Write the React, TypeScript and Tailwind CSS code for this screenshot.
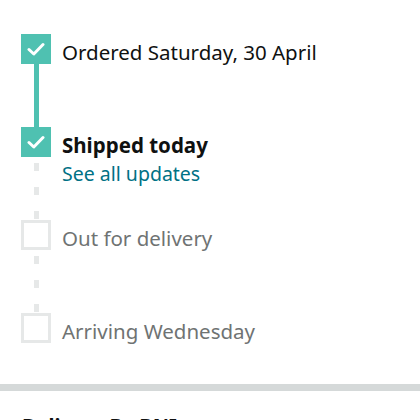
const font = { fontFamily: '"Noto Sans", "Liberation Sans", sans-serif' }

type Step = {
  label: string
  done: boolean
  current?: boolean
  link?: string
}

const steps: Step[] = [
  { label: 'Ordered Saturday, 30 April', done: true },
  { label: 'Shipped today', done: true, current: true, link: 'See all updates' },
  { label: 'Out for delivery', done: false },
  { label: 'Arriving Wednesday', done: false },
]

function Check() {
  return (
    <svg width="18" height="14" viewBox="0 0 18 14" fill="none">
      <path d="M2 7.5 L6.8 12 L16 2.5" stroke="white" strokeWidth="3" strokeLinecap="round" strokeLinejoin="round" />
    </svg>
  )
}

// 연결선: 다음 단계가 완료면 실선, 아니면 점선
function Connector({ solid }: { solid: boolean }) {
  if (solid) return <div className="w-[5px] flex-1 bg-[#4fc1b1]" />
  return (
    <div className="flex flex-1 flex-col items-center gap-[16px] pt-[6px]">
      <div className="h-[8px] w-[5px] bg-[#e6e8e8]" />
      <div className="h-[8px] w-[5px] bg-[#e6e8e8]" />
      <div className="h-[8px] w-[5px] bg-[#e6e8e8]" />
    </div>
  )
}

export default function App() {
  return (
    <div className="h-[420px] w-[420px] overflow-hidden bg-white" style={font}>
      <div className="px-[21px] pt-[34px] pb-[41px]">
        {steps.map((s, i) => {
          const last = i === steps.length - 1
          const next = steps[i + 1]
          return (
            <div key={s.label} className={`flex gap-[11px] ${last ? '' : 'h-[93px]'}`}>
              <div className="flex w-[30px] flex-col items-center">
                {s.done ? (
                  <div className="flex h-[30px] w-[30px] items-center justify-center bg-[#4fc1b1]">
                    <Check />
                  </div>
                ) : (
                  <div className="h-[30px] w-[30px] border-[3px] border-[#e6e8e8]" />
                )}
                {!last && <Connector solid={!!next?.done} />}
              </div>
              <div className="flex flex-col">
                <div
                  className={`flex h-[30px] items-center pt-[6px] text-[20.5px] ${
                    s.current ? 'font-bold text-[#0f1111]' : s.done ? 'text-[#0f1111]' : 'text-[#6f7373]'
                  }`}
                >
                  {s.label}
                </div>
                {s.link && (
                  <a className="mt-[4px] text-[19.5px] leading-[26px] text-[#007185]">{s.link}</a>
                )}
              </div>
            </div>
          )
        })}
      </div>
      <div className="h-[7px] w-full bg-[#d5d9d9]" />
      <div className="px-[22px] pt-[20px] text-[20px] font-bold text-[#0f1111]">Delivery By BNI</div>
    </div>
  )
}
